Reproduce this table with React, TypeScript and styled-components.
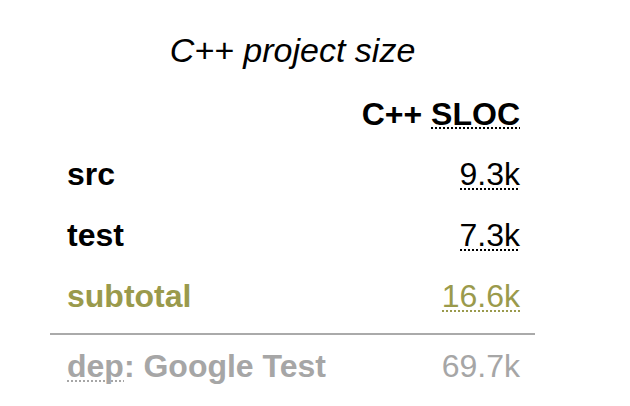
import React from "react";
import styled, { createGlobalStyle, css } from "styled-components";

const GlobalStyle = createGlobalStyle`
  html, body {
    margin: 0;
    padding: 0;
    background: #ffffff;
    font-family: "Liberation Sans", Arial, Helvetica, sans-serif;
  }
`;

const Page = styled.div`
  padding: 30px 0 0 50px;
`;

const Table = styled.table`
  width: 485px;
  border-collapse: collapse;
  border-spacing: 0;
  font-size: 32px;
  line-height: 36px;
  color: #000;
`;

const Caption = styled.caption`
  font-size: 34px;
  line-height: 40px;
  font-style: italic;
  padding-bottom: 14px;
  color: #000;
`;

type Tone = "normal" | "total" | "dep";

const toneColor = (tone: Tone) =>
  tone === "total" ? "#9a9a4c" : tone === "dep" ? "#a6a6a6" : "#000";

const HeadCell = styled.th<{ $align?: "left" | "right" }>`
  padding: 12px 15px 12px 17px;
  text-align: ${(p) => p.$align ?? "left"};
  font-weight: 700;
`;

const Row = styled.tr<{ $tone: Tone; $divider?: boolean }>`
  color: ${(p) => toneColor(p.$tone)};
  ${(p) =>
    p.$divider &&
    css`
      border-top: 2px solid #aaaaaa;
    `}
`;

const LabelCell = styled.td<{ $padBottom?: number; $padTop?: number }>`
  padding: ${(p) => p.$padTop ?? 12}px 15px ${(p) => p.$padBottom ?? 13}px 17px;
  text-align: left;
  font-weight: 700;
  white-space: nowrap;
`;

const ValueCell = styled.td<{ $padBottom?: number; $padTop?: number }>`
  padding: ${(p) => p.$padTop ?? 12}px 15px ${(p) => p.$padBottom ?? 13}px 17px;
  text-align: right;
  font-weight: 400;
  white-space: nowrap;
`;

const Abbr = styled.abbr<{ $drop?: number }>`
  text-decoration: none;
  cursor: help;
  background-image: linear-gradient(to right, currentColor 50%, transparent 50%);
  background-size: 4px 2px;
  background-repeat: repeat-x;
  background-position: left bottom ${(p) => p.$drop ?? 2}px;
`;

type Item = { label: string; value: string; full: string; tone: Tone };

const rows: Item[] = [
  { label: "src", value: "9.3k", full: "9,300", tone: "normal" },
  { label: "test", value: "7.3k", full: "7,300", tone: "normal" },
  { label: "subtotal", value: "16.6k", full: "16,600", tone: "total" },
];

export default function App() {
  return (
    <>
      <GlobalStyle />
      <Page>
        <Table>
          <Caption>C++ project size</Caption>
          <thead>
            <tr>
              <HeadCell $align="left"></HeadCell>
              <HeadCell $align="right">
                C++ <Abbr title="Source lines of code" $drop={3}>SLOC</Abbr>
              </HeadCell>
            </tr>
          </thead>
          <tbody>
            {rows.map((r, i) => {
              const last = i === rows.length - 1;
              return (
                <Row key={r.label} $tone={r.tone}>
                  <LabelCell $padBottom={last ? 19 : 13}>{r.label}</LabelCell>
                  <ValueCell $padBottom={last ? 19 : 13}>
                    <Abbr title={r.full}>{r.value}</Abbr>
                  </ValueCell>
                </Row>
              );
            })}
          </tbody>
          <tfoot>
            <Row $tone="dep" $divider>
              <LabelCell $padTop={13}>
                <Abbr title="dependency">dep</Abbr>: Google Test
              </LabelCell>
              <ValueCell $padTop={13}>69.7k</ValueCell>
            </Row>
          </tfoot>
        </Table>
      </Page>
    </>
  );
}
